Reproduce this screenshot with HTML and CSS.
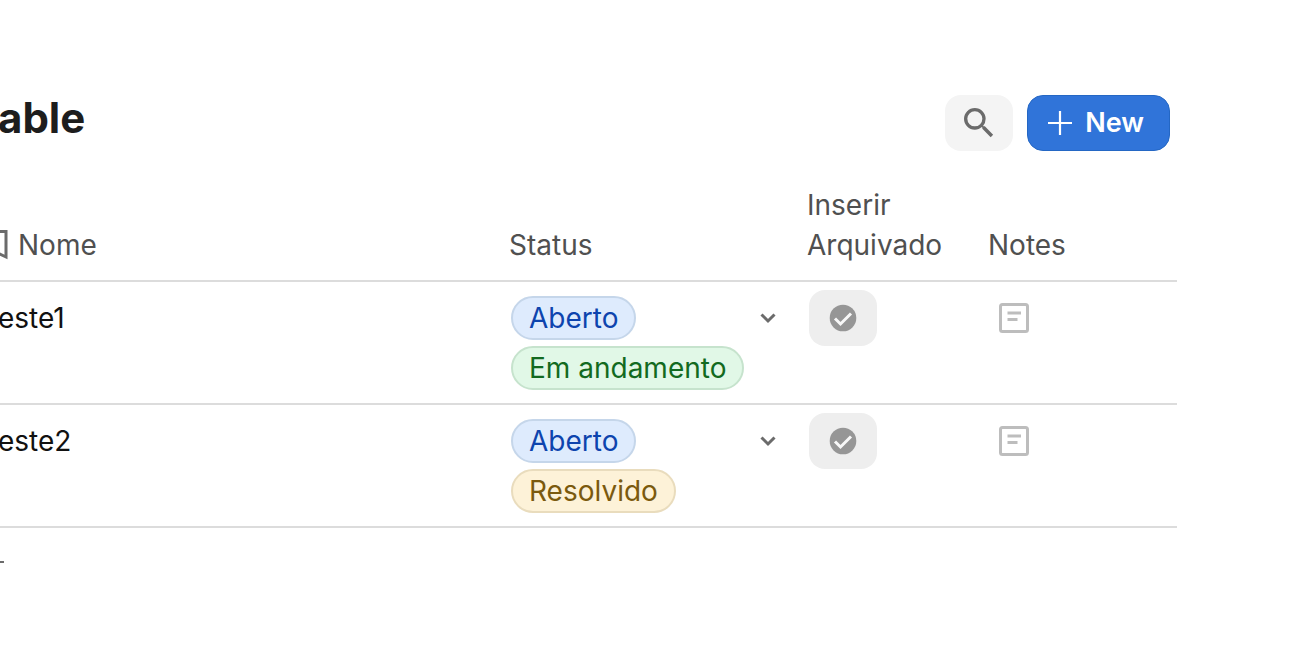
FILE: index.html
```html
<!DOCTYPE html>
<html lang="pt">
<head>
    <meta charset="UTF-8">
    <meta name="viewport" content="width=device-width, initial-scale=1.0">
    <title>Table</title>
    <link rel="stylesheet" href="styles.css">
</head>
<body>
    <main class="page">
        <header class="toolbar">
            <h1 class="title">able</h1>
            <div class="actions">
                <button type="button" class="search-button" aria-label="Search">
                    <svg width="40" height="40" viewBox="0 0 24 24" fill="#6b6b6b"><path d="M15.5 14h-.79l-.28-.27A6.47 6.47 0 0 0 16 9.5 6.5 6.5 0 1 0 9.5 16c1.61 0 3.09-.59 4.23-1.57l.27.28v.79l5 4.99L20.49 19l-4.99-5zm-6 0a4.5 4.5 0 1 1 0-9 4.5 4.5 0 0 1 0 9z"/></svg>
                </button>
                <button type="button" class="new-button">
                    <svg width="26" height="26" viewBox="0 0 26 26" stroke="#fff" stroke-width="2.2"><path d="M13 1v24M1 13h24"/></svg>
                    New
                </button>
            </div>
        </header>

        <table class="records">
            <colgroup>
                <col>
                <col class="col-status">
                <col class="col-archive">
                <col class="col-notes">
            </colgroup>
            <thead>
                <tr>
                    <th scope="col">
                        <span class="name-head">
                            <svg width="10" height="30" viewBox="-2 0 10 30" fill="none" stroke="#6b6b6b" stroke-width="3"><path d="M-12 1.5H6V27L-3 22.8"/></svg>
                            Nome
                        </span>
                    </th>
                    <th scope="col">Status</th>
                    <th scope="col">Inserir<br>Arquivado</th>
                    <th scope="col">Notes</th>
                </tr>
            </thead>
            <tbody>
                <tr>
                    <td class="name">este1</td>
                    <td>
                        <div class="status">
                            <div class="tags">
                                <span class="tag tag-blue">Aberto</span>
                                <span class="tag tag-green">Em andamento</span>
                            </div>
                            <button type="button" class="icon-button chevron" aria-label="Status">
                                <svg width="18" height="12" viewBox="0 0 18 12" fill="none" stroke="#6b6b6b" stroke-width="3"><path d="M2.5 2.5 9 9l6.5-6.5"/></svg>
                            </button>
                        </div>
                    </td>
                    <td>
                        <button type="button" class="archive-button" aria-label="Inserir Arquivado">
                            <svg width="28" height="28" viewBox="0 0 28 28"><circle cx="14" cy="14" r="13.3" fill="#969696"/><path d="M6 14.5l5.5 5.5L22 9.500" fill="none" stroke="#f8f8f8" stroke-width="3"/></svg>
                        </button>
                    </td>
                    <td>
                        <button type="button" class="icon-button note" aria-label="Notes">
                            <svg width="30" height="30" viewBox="0 0 30 30" fill="none" stroke="#bdbdbd" stroke-width="3"><rect x="1.5" y="1.5" width="27" height="27" rx="2"/><path d="M8.5 10H22M8.5 16.5h10"/></svg>
                        </button>
                    </td>
                </tr>
                <tr>
                    <td class="name">este2</td>
                    <td>
                        <div class="status">
                            <div class="tags">
                                <span class="tag tag-blue">Aberto</span>
                                <span class="tag tag-yellow">Resolvido</span>
                            </div>
                            <button type="button" class="icon-button chevron" aria-label="Status">
                                <svg width="18" height="12" viewBox="0 0 18 12" fill="none" stroke="#6b6b6b" stroke-width="3"><path d="M2.5 2.5 9 9l6.5-6.5"/></svg>
                            </button>
                        </div>
                    </td>
                    <td>
                        <button type="button" class="archive-button" aria-label="Inserir Arquivado">
                            <svg width="28" height="28" viewBox="0 0 28 28"><circle cx="14" cy="14" r="13.3" fill="#969696"/><path d="M6 14.5l5.5 5.5L22 9.500" fill="none" stroke="#f8f8f8" stroke-width="3"/></svg>
                        </button>
                    </td>
                    <td>
                        <button type="button" class="icon-button note" aria-label="Notes">
                            <svg width="30" height="30" viewBox="0 0 30 30" fill="none" stroke="#bdbdbd" stroke-width="3"><rect x="1.5" y="1.5" width="27" height="27" rx="2"/><path d="M8.5 10H22M8.5 16.5h10"/></svg>
                        </button>
                    </td>
                </tr>
            </tbody>
        </table>

        <button type="button" class="icon-button add-row" aria-label="Add row">
            <svg width="6" height="24" viewBox="18 0 6 24" stroke="#6b6b6b" stroke-width="2"><path d="M12 0v24M0 12h24"/></svg>
        </button>
    </main>
</body>
</html>
```
FILE: styles.css
```css
* {
    box-sizing: border-box;
}
body {
    margin: 0;
    background: #fff;
    color: #111;
    font-family: Inter, "Liberation Sans", sans-serif;
    font-size: 28px;
    font-weight: 380;
    line-height: 40px;
}
button {
    padding: 0;
    border: 0;
    font: inherit;
    cursor: pointer;
}
svg {
    display: block;
}
.page {
    margin-left: -2px;
    padding: 95px 123px 40px 0;
}
.toolbar {
    display: flex;
    justify-content: space-between;
    align-items: flex-start;
    padding-right: 7px;
}
.title {
    margin: 0;
    font-size: 42px;
    line-height: 46px;
    font-weight: 700;
    color: #1d1d1d;
}
.actions {
    display: flex;
    gap: 14px;
}
.search-button,
.archive-button {
    display: flex;
    align-items: center;
    justify-content: center;
    width: 68px;
    height: 56px;
    border-radius: 16px;
}
.search-button {
    background: #f4f4f4;
}
.archive-button {
    margin-left: 2px;
    background: #eee;
}
.new-button {
    display: flex;
    align-items: center;
    gap: 12px;
    height: 56px;
    padding: 0 25px 0 19px;
    border: 1px solid #2467c4;
    border-radius: 16px;
    background: #3074d9;
    color: #fff;
    font-size: 27px;
    font-weight: 600;
}
.records {
    width: 100%;
    margin-top: 34px;
    border-collapse: separate;
    border-spacing: 0;
    table-layout: fixed;
}
.col-status {
    width: 298px;
}
.col-archive {
    width: 181px;
}
.col-notes {
    width: 189px;
}
th,
td {
    padding: 0;
    border-bottom: 2px solid #dcdcdc;
    text-align: left;
}
th {
    padding-bottom: 15px;
    vertical-align: bottom;
    font-weight: 380;
    color: #505050;
}
td {
    padding: 8px 0 13px;
    vertical-align: top;
}
.name-head {
    display: flex;
    align-items: center;
    gap: 10px;
}
.name {
    padding-top: 16px;
}
.status {
    display: flex;
    justify-content: space-between;
    align-items: flex-start;
    padding: 6px 30px 0 2px;
}
.tags {
    display: flex;
    flex-direction: column;
    align-items: flex-start;
    gap: 6px;
}
.tag {
    padding: 0 16px;
    border: 2px solid;
    border-radius: 22px;
    white-space: nowrap;
}
.tag-blue {
    background: #deebfd;
    border-color: #c5d6ea;
    color: #0d44ae;
}
.tag-green {
    background: #e1f8e7;
    border-color: #c6e3cd;
    color: #126a20;
}
.tag-yellow {
    background: #fdf2d8;
    border-color: #e9dcbd;
    color: #7b5a0e;
}
.icon-button {
    display: flex;
    align-items: center;
    background: none;
}
.chevron {
    height: 44px;
}
.note {
    height: 56px;
    margin-left: 11px;
}
.add-row {
    margin-top: 22px;
}
```
